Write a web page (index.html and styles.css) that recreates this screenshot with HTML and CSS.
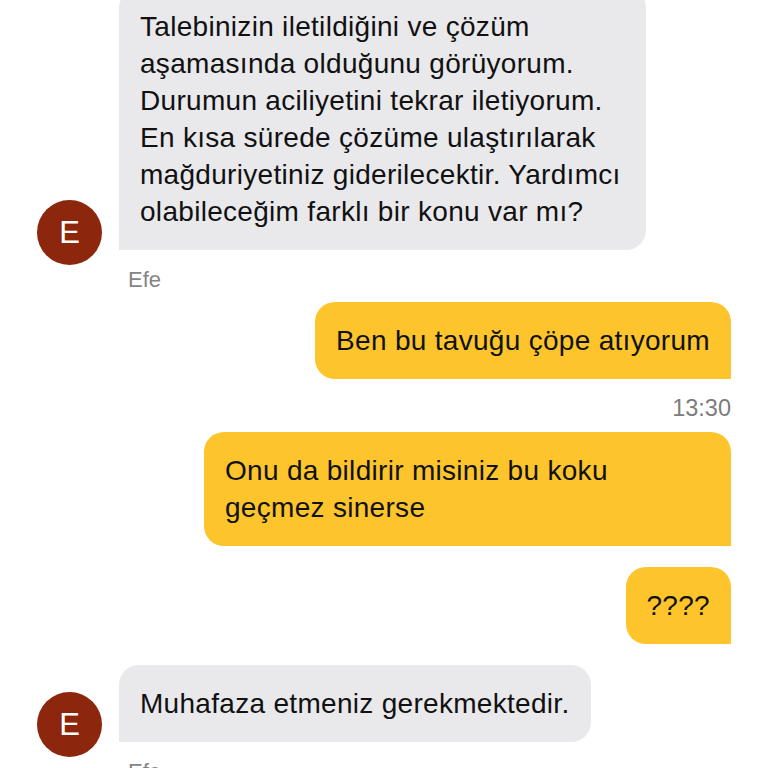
FILE: index.html
```html
<!DOCTYPE html>
<html lang="tr">
<head>
  <meta charset="UTF-8" />
  <meta name="viewport" content="width=device-width, initial-scale=1.0"/>
  <title>Sohbet</title>
  <link rel="stylesheet" href="styles.css">
</head>
<body>
  <div class="chat">
    <div class="msg-row incoming first">
      <div class="avatar">E</div>
      <div class="bubble">Talebinizin iletildiğini ve çözüm aşamasında olduğunu görüyorum. Durumun aciliyetini tekrar iletiyorum. En kısa sürede çözüme ulaştırılarak mağduriyetiniz giderilecektir. Yardımcı olabileceğim farklı bir konu var mı?</div>
    </div>
    <p class="sender">Efe</p>

    <div class="msg-row outgoing gap-s">
      <div class="bubble">Ben bu tavuğu çöpe atıyorum</div>
    </div>
    <p class="time">13:30</p>

    <div class="msg-row outgoing gap-t">
      <div class="bubble">Onu da bildirir misiniz bu koku geçmez sinerse</div>
    </div>

    <div class="msg-row outgoing">
      <div class="bubble">????</div>
    </div>

    <div class="msg-row incoming">
      <div class="avatar">E</div>
      <div class="bubble">Muhafaza etmeniz gerekmektedir.</div>
    </div>
    <p class="sender">Efe</p>
  </div>
</body>
</html>
```

FILE: styles.css
```css
html, body {
  margin: 0;
  padding: 0;
  background-color: #fff;
  font-family: "Liberation Sans", Arial, sans-serif;
  color: #111;
  height: 100%;
  overflow: hidden;
}

.chat {
  padding: 0 37px;
  display: flex;
  flex-direction: column;
}

.msg-row {
  display: flex;
  align-items: flex-end;
  margin-top: 21px;
}

.msg-row.first {
  margin-top: -12px;
}

.msg-row.gap-s {
  margin-top: 10px;
}

.msg-row.gap-t {
  margin-top: 12px;
}

.msg-row.outgoing {
  justify-content: flex-end;
}

.avatar {
  width: 65px;
  height: 65px;
  flex-shrink: 0;
  border-radius: 50%;
  background-color: #8c260c;
  color: #fff;
  font-size: 31px;
  display: flex;
  align-items: center;
  justify-content: center;
  margin-right: 17px;
  margin-bottom: -15px;
}

.bubble {
  max-width: 485px;
  padding: 20px 21px;
  font-size: 28px;
  letter-spacing: 0.3px;
  line-height: 37px;
  border-radius: 20px;
}

.incoming .bubble {
  background-color: #e9e9ec;
  border-bottom-left-radius: 0;
}

.outgoing .bubble {
  background-color: #fdc52b;
  border-bottom-right-radius: 0;
}

.sender {
  margin: 18px 0 0 91px;
  font-size: 22px;
  line-height: 24px;
  color: #858585;
}

.time {
  margin: 17px 0 0;
  text-align: right;
  font-size: 23.5px;
  line-height: 24px;
  color: #7c7c7c;
}
```
